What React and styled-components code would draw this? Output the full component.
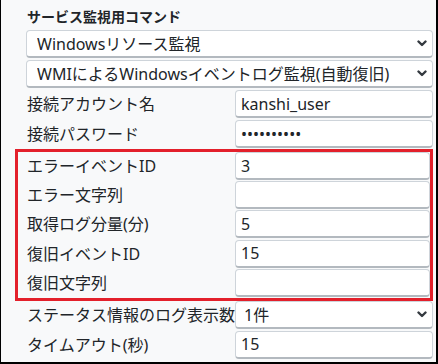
import React from 'react';
import styled, { createGlobalStyle } from 'styled-components';

const GlobalStyle = createGlobalStyle`
  html, body {
    margin: 0;
    padding: 0;
    background: #f8f9fa;
  }
  * {
    box-sizing: border-box;
  }
`;

const chevron =
  "data:image/svg+xml,%3csvg xmlns='http://www.w3.org/2000/svg' viewBox='0 0 10 7'%3e%3cpath fill='none' stroke='%23343a40' stroke-width='2.4' stroke-linecap='round' stroke-linejoin='round' d='M1.5 1.5 5 5l3.5-3.5'/%3e%3c/svg%3e";

const Frame = styled.div`
  width: 438px;
  height: 364px;
  background: #f8f9fa;
  border-left: 1px solid #000;
  border-right: 2px solid #000;
  border-bottom: 2px solid #000;
  padding: 0 3px 0 25px;
  font-family: "Noto Sans", "Noto Sans CJK JP", sans-serif;
  color: #212529;
  overflow: hidden;
`;

const Heading = styled.div`
  height: 30px;
  padding-top: 7px;
  padding-left: 1px;
  font-size: 14px;
  line-height: 20px;
  font-weight: bold;
  color: #212529;
`;

const Select = styled.select`
  display: block;
  width: 100%;
  height: 28px;
  margin-bottom: ${(p) => (p.$flush ? '0' : '2px')};
  padding: 0 24px 0 ${(p) => (p.$narrow ? '8px' : '10px')};
  font-family: inherit;
  font-size: 16px;
  line-height: 26px;
  color: #212529;
  background-color: #fff;
  background-image: url("${chevron}");
  background-repeat: no-repeat;
  background-position: right 5px center;
  background-size: 10px 7px;
  border: 1px solid #ced4da;
  border-bottom: 2px solid #b3b9bf;
  border-radius: 4px;
  appearance: none;
  outline: none;
`;

const Row = styled.div`
  display: grid;
  grid-template-columns: 209px 1fr;
  height: ${(p) => (p.$tight ? '29.2px' : '30px')};
`;

const Label = styled.label`
  display: block;
  height: 28px;
  padding-left: 1px;
  font-size: 16px;
  line-height: 28px;
  white-space: nowrap;
  color: #212529;
`;

const Input = styled.input`
  display: block;
  width: 100%;
  height: 28px;
  padding: 0 5px;
  font-family: inherit;
  font-size: 16px;
  color: #212529;
  background: #fff;
  border: 1px solid #ced4da;
  border-bottom: 2px solid #b3b9bf;
  border-radius: 4px;
  outline: none;
`;

const Highlight = styled.div`
  margin: -1px 0 0 -11px;
  padding-left: 8px;
  border: 3px solid #e3202b;
`;

const account = [
  { label: '接続アカウント名', value: 'kanshi_user' },
  { label: '接続パスワード', value: 'kanshipass', type: 'password' },
];

const recovery = [
  { label: 'エラーイベントID', value: '3' },
  { label: 'エラー文字列', value: '' },
  { label: '取得ログ分量(分)', value: '5' },
  { label: '復旧イベントID', value: '15' },
  { label: '復旧文字列', value: '' },
];

function FieldRow({ label, value, type = 'text', tight }) {
  return (
    <Row $tight={tight}>
      <Label>{label}</Label>
      <Input type={type} defaultValue={value} />
    </Row>
  );
}

export default function App() {
  return (
    <>
      <GlobalStyle />
      <Frame>
        <Heading>サービス監視用コマンド</Heading>
        <Select defaultValue="res">
          <option value="res">Windowsリソース監視</option>
        </Select>
        <Select defaultValue="wmi">
          <option value="wmi">WMIによるWindowsイベントログ監視(自動復旧)</option>
        </Select>
        {account.map((f) => (
          <FieldRow key={f.label} {...f} />
        ))}
        <Highlight>
          {recovery.map((f) => (
            <FieldRow key={f.label} {...f} tight />
          ))}
        </Highlight>
        <Row>
          <Label>ステータス情報のログ表示数</Label>
          <Select $narrow defaultValue="1">
            <option value="1">1件</option>
          </Select>
        </Row>
        <FieldRow label="タイムアウト(秒)" value="15" />
      </Frame>
    </>
  );
}
